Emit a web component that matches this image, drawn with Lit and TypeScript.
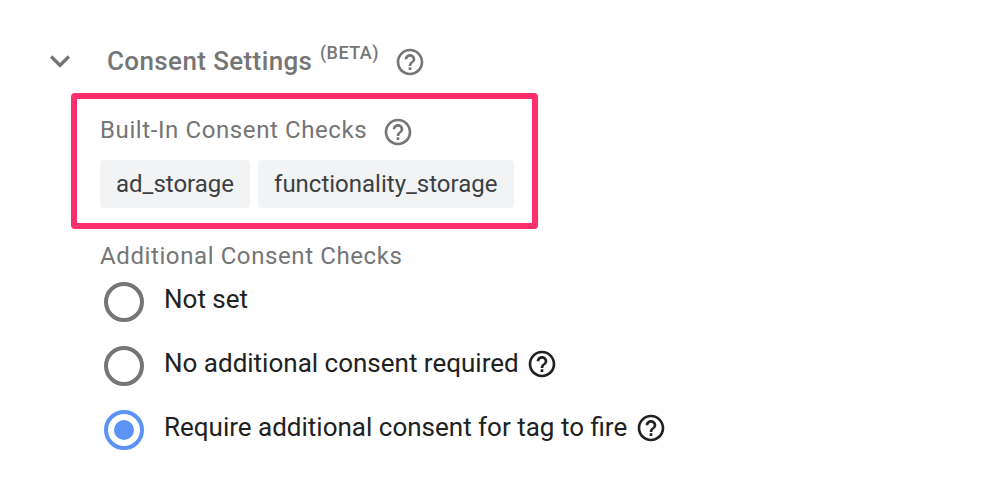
import { LitElement, html, css, svg } from "lit";
import { customElement, property } from "lit/decorators.js";
import { classMap } from "lit/directives/class-map.js";

@customElement("help-icon")
class HelpIcon extends LitElement {
  static styles = css`
    :host { display: block; width: 32px; height: 32px; flex: none; }
    svg { display: block; width: 32px; height: 32px; fill: currentColor; }
  `;
  render() {
    return html`<svg viewBox="0 0 24 24" aria-label="Help">
      ${svg`<path d="M11 18h2v-2h-2v2zm1-16C6.48 2 2 6.48 2 12s4.48 10 10 10 10-4.48 10-10S17.52 2 12 2zm0 18c-4.41 0-8-3.59-8-8s3.59-8 8-8 8 3.59 8 8-3.59 8-8 8zm0-14c-2.21 0-4 1.79-4 4h2c0-1.1.9-2 2-2s2 .9 2 2c0 2-3 1.75-3 5h2c0-2.25 3-2.5 3-5 0-2.21-1.79-4-4-4z"/>`}
    </svg>`;
  }
}

@customElement("radio-option")
class RadioOption extends LitElement {
  @property() label = "";
  @property({ type: Boolean }) checked = false;
  @property({ type: Boolean }) help = false;

  static styles = css`
    :host { display: flex; height: 64px; align-items: flex-start; color: #212121; }
    .ring {
      box-sizing: border-box; width: 40px; height: 40px; margin: 2px 20px 0 4px;
      border: 4px solid #757575; border-radius: 50%;
      display: flex; align-items: center; justify-content: center; flex: none;
    }
    .ring.on { border-color: #5b94f5; }
    .dot { width: 20px; height: 20px; border-radius: 50%; background: #5b94f5; }
    .label { font-size: 26px; line-height: 38px; white-space: nowrap; }
    help-icon { margin: 4px 0 0 7.7px; }
  `;
  render() {
    return html`
      <div class=${classMap({ ring: true, on: this.checked })}>
        ${this.checked ? html`<div class="dot"></div>` : null}
      </div>
      <span class="label">${this.label}</span>
      ${this.help ? html`<help-icon></help-icon>` : null}
    `;
  }
}

@customElement("app-root")
class AppRoot extends LitElement {
  static styles = css`
    :host {
      display: block; box-sizing: border-box; width: 994px; height: 478px;
      padding-top: 42px; overflow: hidden; background: #fff; color: #757575;
      font-family: Roboto, "Liberation Sans", sans-serif;
    }
    .header { display: flex; height: 51px; padding-left: 40px; }
    .chevron { width: 40px; height: 38px; fill: currentColor; margin-right: 27px; }
    .title { font-size: 26px; font-weight: 500; line-height: 38px; letter-spacing: 0.38px; white-space: nowrap; }
    .beta { font-size: 18px; font-weight: 500; line-height: 22px; margin-left: 7.5px; letter-spacing: 0.45px; }
    .header help-icon { margin: 4px 0 0 15.4px; }
    .highlight {
      box-sizing: border-box; width: 467px; height: 136px; margin-left: 71px;
      border: 6px solid #ff2e6c; border-radius: 4px; padding: 15px 0 0 23px;
    }
    .row { display: flex; height: 46px; }
    .caption { font-size: 24px; line-height: 32px; letter-spacing: 0.6px; white-space: nowrap; }
    .row help-icon { margin: 2px 0 0 15px; }
    .chips { display: flex; gap: 8px; }
    .chip {
      box-sizing: border-box; height: 48px; padding: 0 16px; border-radius: 4px; background: #f1f3f4;
      color: #3c4043; font-size: 24px; line-height: 48px; white-space: nowrap;
    }
    .chip:last-child { padding-right: 17px; }
    .additional { padding: 11px 0 0 100px; }
    .options { padding-top: 8px; }
  `;
  render() {
    return html`
      <div class="header">
        <svg class="chevron" viewBox="0 0 24 24" preserveAspectRatio="xMidYMid slice"><path d="M16.59 8.59L12 13.17 7.41 8.59 6 10l6 6 6-6z" /></svg>
        <span class="title">Consent Settings</span>
        <span class="beta">(BETA)</span>
        <help-icon></help-icon>
      </div>
      <div class="highlight">
        <div class="row">
          <span class="caption">Built-In Consent Checks</span>
          <help-icon></help-icon>
        </div>
        <div class="chips">
          <span class="chip">ad_storage</span>
          <span class="chip">functionality_storage</span>
        </div>
      </div>
      <div class="additional">
        <div class="caption">Additional Consent Checks</div>
        <div class="options">
          <radio-option label="Not set"></radio-option>
          <radio-option label="No additional consent required" help></radio-option>
          <radio-option label="Require additional consent for tag to fire" checked help></radio-option>
        </div>
      </div>
    `;
  }
}
